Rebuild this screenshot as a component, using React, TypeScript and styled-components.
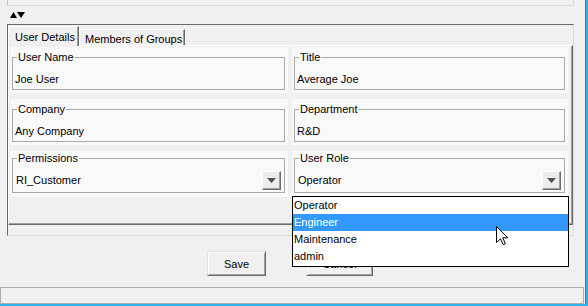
import React from 'react';
import styled, { createGlobalStyle } from 'styled-components';

const GlobalStyle = createGlobalStyle`
  html, body {
    margin: 0;
    padding: 0;
    background: #f0f0f0;
  }
  * {
    box-sizing: border-box;
  }
`;

const FIELDS = [
  { label: 'User Name', value: 'Joe User' },
  { label: 'Title', value: 'Average Joe' },
  { label: 'Company', value: 'Any Company' },
  { label: 'Department', value: 'R&D' },
];

const COMBOS = [
  { label: 'Permissions', value: 'RI_Customer' },
  { label: 'User Role', value: 'Operator' },
];

const ROLES = ['Operator', 'Engineer', 'Maintenance', 'admin'];

export default function App() {
  return (
    <Screen>
      <GlobalStyle />
      <Content>
        <TopStub />
        <ArrowRow>
          <svg width="15" height="6" viewBox="0 0 15 6">
            <polygon points="0,6 3.5,0 7,6" fill="#000" />
            <polygon points="7,0 15,0 11,6" fill="#000" />
          </svg>
        </ArrowRow>
        <MainPanel>
          <TabStrip>
            <Tab $active>User Details</Tab>
            <Tab>Members of Groups</Tab>
          </TabStrip>
          <TabPage>
            <FieldGrid>
              {FIELDS.map((f) => (
                <Card key={f.label}>
                  <Group>
                    <Legend>{f.label}</Legend>
                    <Value>{f.value}</Value>
                  </Group>
                </Card>
              ))}
              {COMBOS.map((c) => (
                <Card key={c.label} $combo>
                  <Group $combo>
                    <Legend>{c.label}</Legend>
                    <ComboRow>
                      <span>{c.value}</span>
                      <DropButton>
                        <svg width="9" height="5" viewBox="0 0 9 5">
                          <polygon points="0,0 9,0 4.5,5" fill="#505050" />
                        </svg>
                      </DropButton>
                    </ComboRow>
                  </Group>
                </Card>
              ))}
            </FieldGrid>
          </TabPage>
        </MainPanel>
        <ButtonRow>
          <PushButton $width={59}>Save</PushButton>
          <PushButton $width={67}>Cancel</PushButton>
        </ButtonRow>
        <StatusBar />
      </Content>

      <DropList>
        {ROLES.map((r) => (
          <DropItem key={r} $selected={r === 'Engineer'}>
            {r}
          </DropItem>
        ))}
      </DropList>

      <Cursor width="13" height="20" viewBox="0 0 13 20">
        <path
          d="M0.5 0.5 L0.5 16.5 L4.5 12.8 L7.2 18.8 L9.4 17.8 L6.8 11.8 L11.8 11.8 Z"
          fill="#fff"
          stroke="#000"
          strokeWidth="1"
          strokeLinejoin="miter"
        />
      </Cursor>
    </Screen>
  );
}

const Screen = styled.div`
  position: relative;
  width: 588px;
  height: 306px;
  overflow: hidden;
  background: #f0f0f0;
  border-right: 2px solid #2fb2e6;
  border-bottom: 2px solid #2fb2e6;
  font-family: 'Liberation Sans', Arial, sans-serif;
  font-size: 11px;
  color: #000;
`;

const Content = styled.div`
  width: 586px;
  height: 304px;
  display: flex;
  flex-direction: column;
  border-right: 1px solid #6a6a6a;
`;

const TopStub = styled.div`
  margin-left: 7px;
  width: 567px;
  height: 6px;
  flex-shrink: 0;
  border: 1px solid #d9d9d9;
  border-top: none;
  border-left-color: #c4c4c4;
`;

const ArrowRow = styled.div`
  height: 18px;
  flex-shrink: 0;
  display: flex;
  align-items: flex-start;
  padding: 6px 0 0 10px;

  svg {
    display: block;
  }
`;

const MainPanel = styled.div`
  margin-left: 7px;
  width: 567px;
  height: 212px;
  flex-shrink: 0;
  display: flex;
  flex-direction: column;
  border-top: 1px solid #6a6a6a;
  border-left: 1px solid #6a6a6a;
  border-right: 1px solid #dcdcdc;
  border-bottom: 1px solid #dcdcdc;
`;

const TabStrip = styled.div`
  height: 20px;
  flex-shrink: 0;
  display: flex;
  align-items: flex-end;
`;

const Tab = styled.div<{ $active?: boolean }>`
  position: relative;
  z-index: 1;
  height: ${(p) => (p.$active ? '20px' : '16px')};
  width: ${(p) => (p.$active ? '71px' : '106px')};
  margin-bottom: ${(p) => (p.$active ? '-1px' : '0')};
  padding: ${(p) => (p.$active ? '4px 0 0 6px' : '3px 0 0 5px')};
  line-height: 13px;
  white-space: nowrap;
  background: #f0f0f0;
  border-top: 1px solid #ffffff;
  border-left: 1px solid #ffffff;
  border-right: 1px solid #6a6a6a;
  box-shadow: inset -1px 0 0 #a0a0a0;
`;

const TabPage = styled.div`
  width: 565px;
  height: 180px;
  flex-shrink: 0;
  padding: 1px 3px 0 1px;
  border-top: 1px solid #ffffff;
  border-left: 1px solid #ffffff;
  border-right: 1px solid #6a6a6a;
  border-bottom: 1px solid #6a6a6a;
  box-shadow: inset -1px -1px 0 #a0a0a0;
`;

const FieldGrid = styled.div`
  display: grid;
  grid-template-columns: 278px 276px;
  grid-auto-rows: 46px;
  column-gap: 4px;
  row-gap: 6px;
`;

const Card = styled.div<{ $combo?: boolean }>`
  background: #f9f9f9;
  padding: ${(p) => (p.$combo ? '1px 3px 3px 2px' : '4px 3px 3px 2px')};
`;

const Group = styled.fieldset<{ $combo?: boolean }>`
  margin: 0;
  min-width: 0;
  padding: 0 3px ${(p) => (p.$combo ? '2px' : '3px')} 2px;
  border: 1px solid #a9a9a9;
`;

const Legend = styled.legend`
  margin-left: 2px;
  padding: 0 1px;
  line-height: 13px;
  font-size: 11px;
`;

const Value = styled.div`
  margin-top: 9px;
  line-height: 13px;
  white-space: nowrap;
`;

const ComboRow = styled.div`
  margin-top: 6px;
  height: 19px;
  display: flex;
  align-items: center;
  justify-content: space-between;
  padding-left: 1px;
  line-height: 13px;
`;

const DropButton = styled.div`
  width: 19px;
  height: 19px;
  display: flex;
  align-items: center;
  justify-content: center;
  background: #ececec;
  border-top: 1px solid #ffffff;
  border-left: 1px solid #ffffff;
  border-right: 1px solid #6a6a6a;
  border-bottom: 1px solid #6a6a6a;
  box-shadow: inset -1px -1px 0 #a0a0a0;

  svg {
    display: block;
  }
`;

const ButtonRow = styled.div`
  height: 51px;
  flex-shrink: 0;
  display: flex;
  gap: 40px;
  padding: 15px 0 0 207px;
`;

const PushButton = styled.div<{ $width: number }>`
  width: ${(p) => p.$width}px;
  height: 25px;
  display: flex;
  align-items: center;
  justify-content: center;
  background: #f0f0f0;
  border-top: 1px solid #e3e3e3;
  border-left: 1px solid #e3e3e3;
  border-right: 1px solid #6a6a6a;
  border-bottom: 1px solid #6a6a6a;
  box-shadow: inset 1px 1px 0 #ffffff, inset -1px -1px 0 #a0a0a0;
`;

const StatusBar = styled.div`
  width: 584px;
  height: 17px;
  flex-shrink: 0;
  border: 1px solid #acacac;
`;

const DropList = styled.div`
  position: absolute;
  left: 292px;
  top: 196px;
  width: 277px;
  height: 71px;
  z-index: 5;
  background: #ffffff;
  border: 1px solid #000000;
`;

const DropItem = styled.div<{ $selected?: boolean }>`
  height: 17px;
  line-height: 17px;
  padding-left: 1px;
  background: ${(p) => (p.$selected ? '#3399ff' : '#ffffff')};
  color: ${(p) => (p.$selected ? '#ffffff' : '#000000')};
`;

const Cursor = styled.svg`
  position: absolute;
  left: 496px;
  top: 226px;
  z-index: 10;
`;
